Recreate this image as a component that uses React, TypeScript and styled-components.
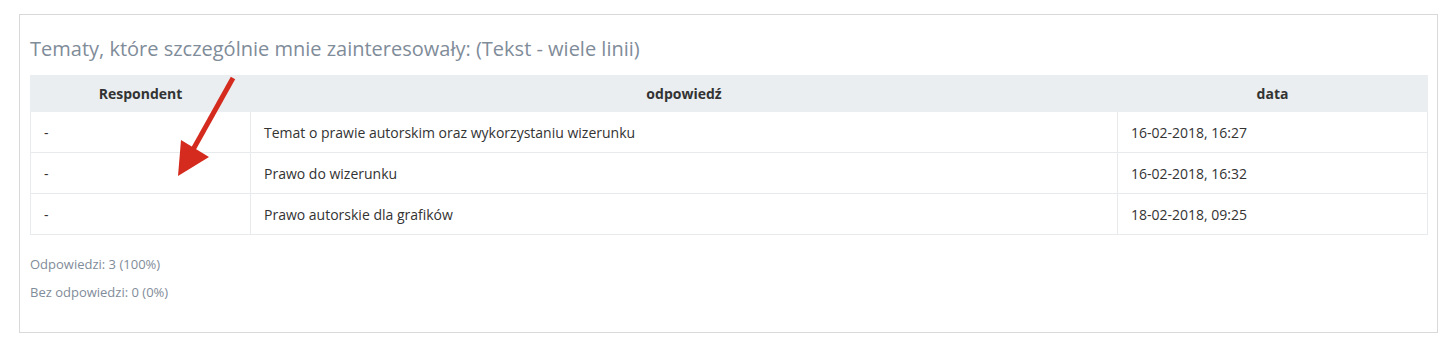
import React from 'react';
import styled, { createGlobalStyle } from 'styled-components';

const GlobalStyle = createGlobalStyle`
  body {
    margin: 0;
    background: #fff;
    font-family: "Open Sans", "Liberation Sans", sans-serif;
  }
`;

const Page = styled.div`
  padding: 14px 16px 7px 19px;
`;

const Panel = styled.section`
  position: relative;
  border: 1px solid #d9d9d9;
  padding: 24px 10px 31px 10px;
`;

const Title = styled.h3`
  margin: 0 0 16px 0;
  font-size: 20px;
  line-height: 20px;
  font-weight: 400;
  color: #7f8c99;
`;

const Table = styled.table`
  width: 100%;
  table-layout: fixed;
  border-collapse: collapse;
  font-size: 14px;
  color: #333;
`;

const Th = styled.th`
  height: 35px;
  padding: 0 12px;
  background: #eaeef1;
  font-weight: 700;
  text-align: center;
  line-height: 17px;
  border: 1px solid #eaeef1;
`;

const Td = styled.td`
  height: 40px;
  padding: 0 13px;
  line-height: 17px;
  border: 1px solid #e8ebee;
  text-align: left;
`;

const Stats = styled.div`
  margin-top: 20px;
  display: flex;
  flex-direction: column;
  gap: 10px;
`;

const Stat = styled.div`
  font-size: 13px;
  line-height: 18px;
  color: #7f8c99;
`;

const Arrow = styled.svg`
  position: absolute;
  left: 140px;
  top: 55px;
  overflow: visible;
`;

const rows = [
  { respondent: '-', answer: 'Temat o prawie autorskim oraz wykorzystaniu wizerunku', date: '16-02-2018, 16:27' },
  { respondent: '-', answer: 'Prawo do wizerunku', date: '16-02-2018, 16:32' },
  { respondent: '-', answer: 'Prawo autorskie dla grafików', date: '18-02-2018, 09:25' },
];

export default function App() {
  return (
    <>
      <GlobalStyle />
      <Page>
        <Panel>
          <Title>Tematy, które szczególnie mnie zainteresowały: (Tekst - wiele linii)</Title>
          <Table>
            <colgroup>
              <col style={{ width: 220 }} />
              <col style={{ width: 867 }} />
              <col style={{ width: 310 }} />
            </colgroup>
            <thead>
              <tr>
                <Th>Respondent</Th>
                <Th>odpowiedź</Th>
                <Th>data</Th>
              </tr>
            </thead>
            <tbody>
              {rows.map((r, i) => (
                <tr key={i}>
                  <Td>{r.respondent}</Td>
                  <Td>{r.answer}</Td>
                  <Td>{r.date}</Td>
                </tr>
              ))}
            </tbody>
          </Table>
          <Stats>
            <Stat>Odpowiedzi: 3 (100%)</Stat>
            <Stat>Bez odpowiedzi: 0 (0%)</Stat>
          </Stats>
          <Arrow width="80" height="110" viewBox="0 0 80 110">
            <line x1="73" y1="8" x2="30" y2="85" stroke="#d42b1e" strokeWidth="5" strokeLinecap="butt" />
            <polygon points="18,106 21,70 49,87" fill="#d42b1e" />
          </Arrow>
        </Panel>
      </Page>
    </>
  );
}
